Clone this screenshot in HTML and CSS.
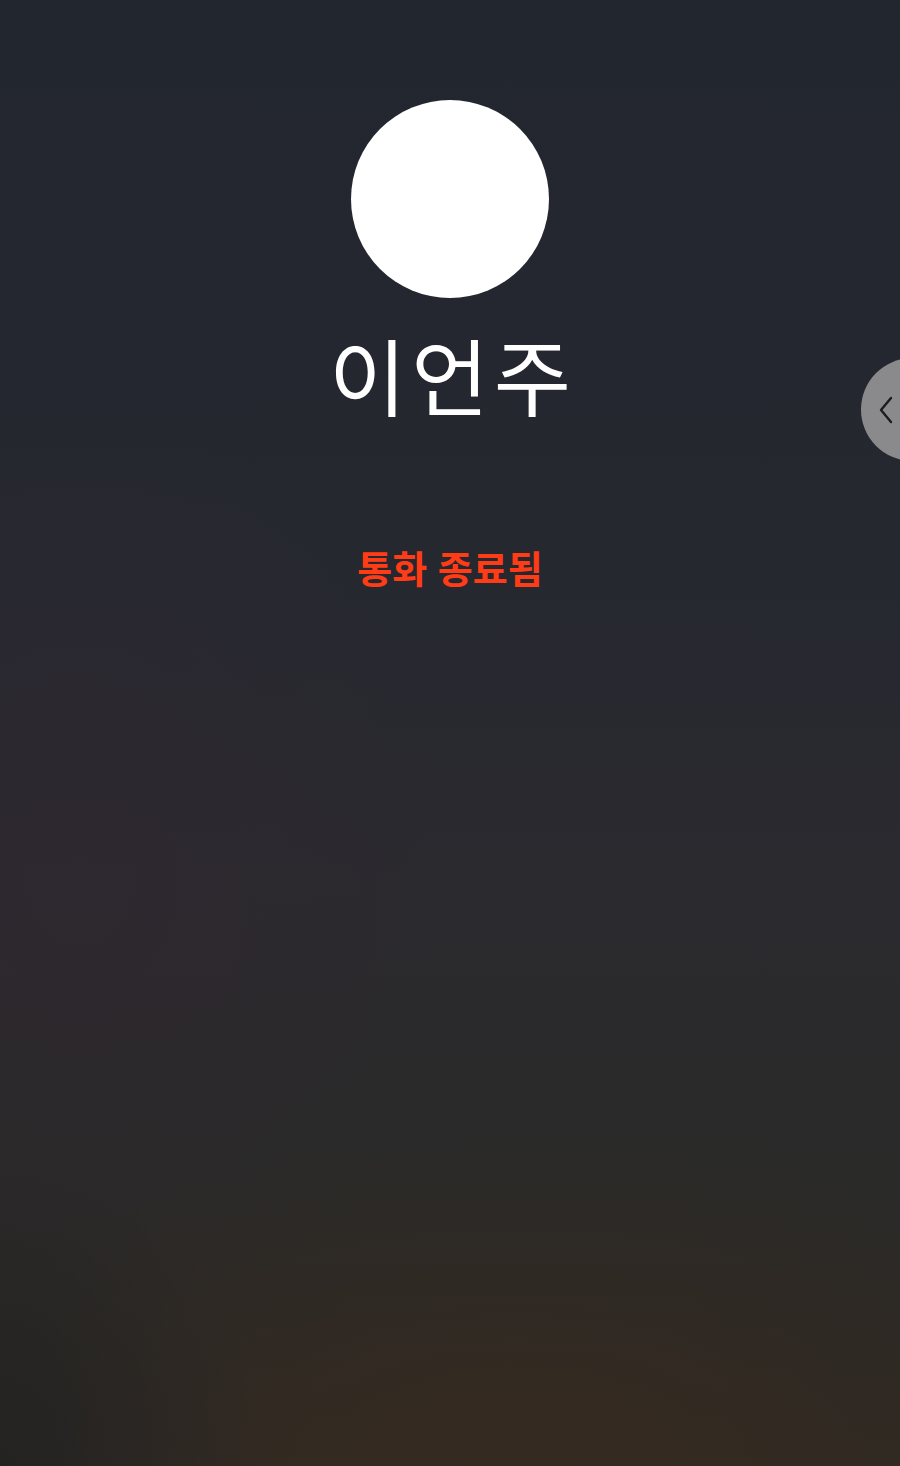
FILE: index.html
```html
<!DOCTYPE html>
<html lang="ko">
<head>
<meta charset="utf-8">
<link rel="stylesheet" href="styles.css">
</head>
<body>
<main class="screen">
  <div class="avatar"></div>
  <h1 class="name">이언주</h1>
  <p class="status">통화 종료됨</p>
  <button class="side-tab" aria-label="열기">
    <svg width="16" height="28" viewBox="0 0 16 28"><path d="M13 2 L3 14 L13 26" fill="none" stroke="#1c1c1e" stroke-width="2.4" stroke-linecap="round" stroke-linejoin="round"/></svg>
  </button>
</main>
</body>
</html>
```

FILE: styles.css
```css
html, body {
  margin: 0;
  padding: 0;
  height: 100%;
}
body {
  font-family: "Noto Sans CJK KR", "Noto Sans", sans-serif;
  overflow: hidden;
}
.screen {
  position: relative;
  width: 900px;
  height: 1466px;
  display: flex;
  flex-direction: column;
  align-items: center;
  background:
    radial-gradient(ellipse 260px 320px at 0px 1466px, rgba(34,34,34,0.9), rgba(34,34,34,0) 100%),
    radial-gradient(ellipse 620px 340px at 520px 1466px, rgba(56,42,30,0.7), rgba(56,42,30,0) 100%),
    radial-gradient(ellipse 360px 460px at 80px 880px, rgba(50,38,48,0.45), rgba(50,38,48,0) 100%),
    linear-gradient(180deg, #22262e 0%, #262830 40%, #2b2a2f 60%, #2a2a29 80%, #2e2924 100%);
  overflow: hidden;
}
.avatar {
  margin-top: 100px;
  width: 198px;
  height: 198px;
  border-radius: 50%;
  background: #ffffff;
}
.name {
  margin: 26px 0 0;
  padding-left: 5px;
  font-size: 84px;
  font-weight: 400;
  line-height: 1.2;
  color: #ffffff;
  letter-spacing: 5px;
}
.status {
  margin: 119px 0 0;
  font-size: 38px;
  font-weight: 700;
  line-height: 1.2;
  color: #ff3c16;
}
.side-tab {
  position: absolute;
  left: 861px;
  top: 358px;
  width: 103px;
  height: 103px;
  border: none;
  border-radius: 50%;
  background: #8a8a8c;
  padding: 0 0 0 17px;
  display: flex;
  align-items: center;
  justify-content: flex-start;
}
```
